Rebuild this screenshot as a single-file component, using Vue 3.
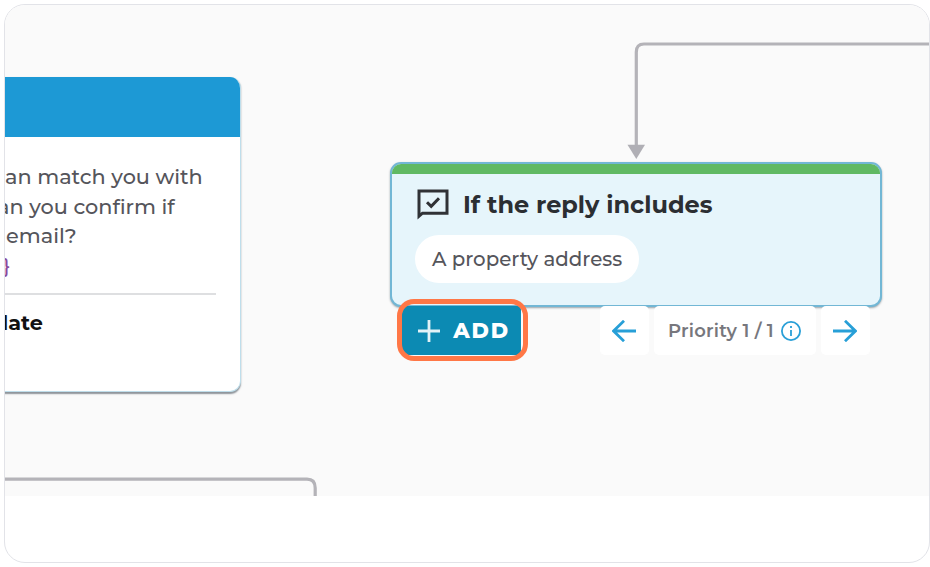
<template>
  <div class="frame">
    <div class="canvas">
      <!-- Connectors -->
      <svg class="connectors" viewBox="5 5 924 491" width="924" height="491">
        <path d="M930 44H644Q636.300 44 636.300 52V147" />
        <path d="M0 479.200H307Q315.200 479.200 315.200 488V500" />
        <polygon points="627.500,144.800 645,144.800 636.300,159" />
      </svg>

      <!-- Message node -->
      <div class="node message-node">
        <div class="message-header"></div>
        <div class="message-body">
          <p v-for="(line, i) in lines" :key="i" :class="['line', line.cls]">
            {{ line.text }}
          </p>
          <div class="divider"></div>
          <p class="line update">late</p>
        </div>
      </div>

      <!-- Condition node -->
      <div class="node condition-node">
        <div class="condition-bar"></div>
        <div class="condition-title">
          <svg class="reply-icon" viewBox="0 0 32 31" width="32" height="31">
            <path d="M2 27.200V2H30V24.200H5.500Z" />
            <path d="M10 13.200L14.200 17.400L22 9.200" />
          </svg>
          <h3>If the reply includes</h3>
        </div>
        <span class="pill">A property address</span>
      </div>

      <!-- Actions under the condition -->
      <div class="actions">
        <button class="add-btn">
          <svg viewBox="0 0 22 22" width="22" height="22">
            <path d="M11 0V22M0 11H22" />
          </svg>
          <span>ADD</span>
        </button>
        <div class="priority">
          <button class="arrow-btn">
            <svg viewBox="0 0 24 22" width="24" height="22">
              <path d="M24 11H1.500M12 .8L1.600 11L12 21.200" />
            </svg>
          </button>
          <div class="priority-label">
            <span>Priority 1 / 1</span>
            <svg viewBox="0 0 20 20" width="20" height="20">
              <circle cx="10" cy="10" r="9.100" />
              <path d="M10 9V15M10 5V7" />
            </svg>
          </div>
          <button class="arrow-btn">
            <svg viewBox="0 0 24 22" width="24" height="22">
              <path d="M0 11H22.500M12 .8L22.400 11L12 21.200" />
            </svg>
          </button>
        </div>
      </div>
      <div class="highlight"></div>
    </div>
  </div>
</template>

<script setup>
import { ref } from 'vue';

const lines = ref([
  { text: 'an match you with', cls: 'first' },
  { text: 'an you confirm if', cls: 'second' },
  { text: 'email?', cls: 'third' },
  { text: '}', cls: 'token' },
]);
</script>

<style>
body {
  background: #fff;
}
</style>

<style scoped>
.frame {
  box-sizing: border-box;
  width: 926px;
  height: 559px;
  margin: 4px 0 0 4px;
  border: 1px solid #e2e3e8;
  border-radius: 21px;
  overflow: hidden;
  background: #fff;
  font-family: Montserrat, Inter, 'Liberation Sans', sans-serif;
}

.canvas {
  position: relative;
  height: 491px;
  background: #fafafa;
  overflow: hidden;
}

.connectors {
  display: block;
}

.connectors path {
  fill: none;
  stroke: #b4b3b8;
  stroke-width: 3.2;
}

.connectors polygon {
  fill: #b0afb5;
}

.node {
  position: absolute;
  box-sizing: border-box;
  overflow: hidden;
}

.message-node {
  left: -20px;
  top: 72px;
  width: 255.5px;
  height: 315px;
  border: 1.5px solid #bfdeeb;
  border-top: 0;
  border-radius: 11px;
  background: #fff;
  box-shadow: 0 1.5px 1.5px rgba(70, 80, 90, 0.6);
}

.message-header {
  height: 60px;
  margin-right: -2px;
  background: #1d99d5;
}

.message-body {
  padding: 25.4px 24px 0 19px;
}

.line {
  margin: 0;
  height: 29.5px;
  line-height: 29.5px;
  font-size: 20.8px;
  font-weight: 500;
  color: #55555b;
  white-space: nowrap;
}

.second {
  margin-left: -8px;
}

.third {
  margin-left: 1px;
}

.token {
  margin-left: -2px;
  color: #8c4a9c;
}

.divider {
  height: 2px;
  margin-top: 13px;
  background: #dedfe1;
}

.update {
  margin-top: 12.6px;
  margin-left: -3px;
  color: #111;
  font-weight: 700;
}

.condition-node {
  left: 385px;
  top: 157px;
  width: 492px;
  height: 145px;
  border: 2px solid #72b7d5;
  border-radius: 11px;
  background: #e6f5fb;
  box-shadow: 0 1px 2px rgba(60, 80, 90, 0.5);
}

.condition-bar {
  height: 10px;
  background: #60b963;
}

.condition-title {
  display: flex;
  align-items: center;
  gap: 14px;
  height: 60px;
  padding-left: 25px;
  margin-bottom: 1px;
}

.reply-icon {
  fill: none;
  stroke: #303236;
  stroke-width: 3;
}

h3 {
  margin: 0;
  font-size: 24px;
  font-weight: 700;
  color: #2b2e32;
  white-space: nowrap;
}

.pill {
  display: flex;
  align-items: center;
  justify-content: center;
  width: 224px;
  height: 48px;
  margin-left: 23px;
  border-radius: 24px;
  background: #fff;
  color: #55555b;
  font-size: 19.8px;
  font-weight: 500;
  white-space: nowrap;
}

.actions {
  position: absolute;
  left: 397px;
  top: 301px;
  display: flex;
  justify-content: space-between;
  width: 468px;
  height: 49px;
}

button {
  display: flex;
  align-items: center;
  justify-content: center;
  padding: 0;
  border: 0;
  font-family: inherit;
}

svg {
  flex: none;
}

.add-btn {
  gap: 13px;
  box-sizing: border-box;
  width: 119px;
  padding-left: 5px;
  border-radius: 4px;
  background: #0c8ab3;
  color: #fff;
  font-size: 21px;
  font-weight: 800;
  letter-spacing: 1.8px;
}

.add-btn path {
  stroke: #e2f2f7;
  stroke-width: 2.8;
}

.priority {
  display: flex;
  gap: 5px;
}

.arrow-btn,
.priority-label {
  width: 49px;
  border-radius: 5px;
  background: #fff;
}

.arrow-btn {
  padding-right: 2px;
  box-sizing: border-box;
}

.arrow-btn path {
  fill: none;
  stroke: #279fd7;
  stroke-width: 2.8;
}

.priority-label {
  display: flex;
  align-items: center;
  justify-content: center;
  gap: 7px;
  box-sizing: border-box;
  width: 162px;
  padding-right: 1px;
  color: #77777d;
  font-size: 18px;
  font-weight: 600;
  letter-spacing: 0.25px;
  white-space: nowrap;
}

.priority-label svg {
  fill: none;
  stroke: #299fd7;
  stroke-width: 1.8;
}

.highlight {
  position: absolute;
  box-sizing: border-box;
  left: 391.5px;
  top: 294px;
  width: 131px;
  height: 62px;
  border: 5px solid #ff7746;
  border-radius: 17px;
}
</style>
